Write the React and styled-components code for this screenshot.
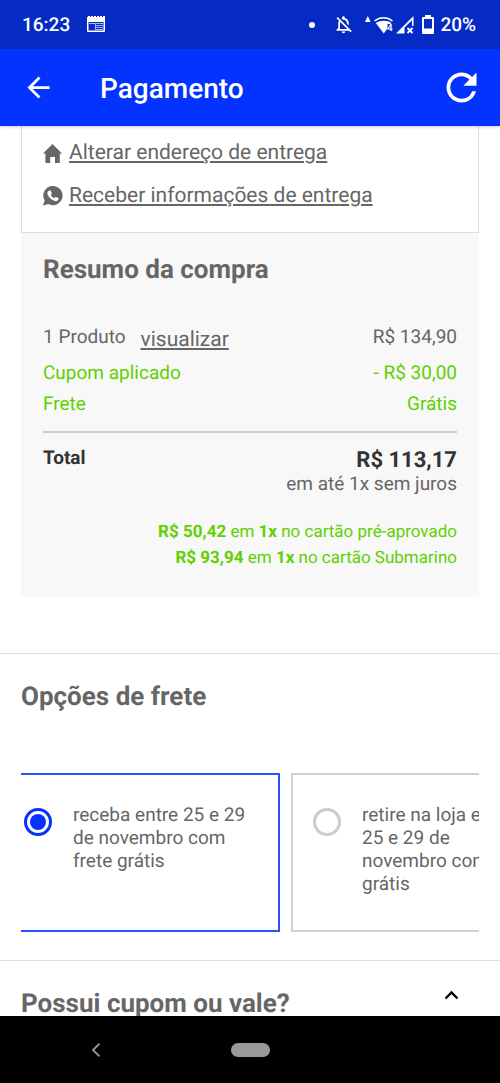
import { useLayoutEffect, useRef, useState } from 'react';
import styled, { createGlobalStyle } from 'styled-components';
import { MdArrowBack, MdOutlineNotificationsOff, MdRefresh } from 'react-icons/md';

const GlobalStyle = createGlobalStyle`
  * {
    box-sizing: border-box;
  }

  body {
    margin: 0;
    background: #fff;
    color: #666;
    font-family: Roboto, 'Liberation Sans', sans-serif;
    font-size: 19px;
    line-height: 24px;
    text-rendering: geometricPrecision;
  }

  h1, h2, p, dl, dt, dd, ul {
    margin: 0;
    padding: 0;
  }

  button {
    display: flex;
    padding: 0;
    border: 0;
    background: none;
    color: inherit;
    font: inherit;
    text-rendering: inherit;
    cursor: pointer;
  }

  svg {
    display: block;
    flex: none;
  }
`;

const StyledApp = styled.div`
  display: flex;
  flex-direction: column;
  height: 100vh;
`;

const StyledStatusBar = styled.div`
  display: flex;
  flex: none;
  align-items: center;
  justify-content: space-between;
  height: 49px;
  padding: 0 24px 0 22px;
  background: #062bc5;
  color: #fff;
  font-weight: 500;
`;

const StyledStatusGroup = styled.div`
  display: flex;
  align-items: center;
  gap: ${({ $gap }) => $gap}px;
`;

const StyledDot = styled.span`
  width: 6px;
  height: 6px;
  border-radius: 50%;
  background: #fff;
`;

const StyledHeader = styled.header`
  position: relative;
  z-index: 1;
  display: flex;
  flex: none;
  align-items: center;
  height: 77px;
  padding: 0 16px 0 22px;
  background: #0432ff;
  box-shadow: 0 1px 3px rgba(0, 0, 0, 0.2);
  color: #fff;

  h1 {
    flex: 1;
    margin-left: 45px;
    padding-top: 2px;
    font-size: 28px;
    font-weight: 500;
    line-height: 32px;
  }
`;

const StyledMain = styled.main`
  flex: 1;
  min-height: 0;
  overflow-y: auto;
  scrollbar-width: none;
`;

const StyledOrder = styled.div`
  margin: 0 21px 56px;
`;

const StyledDelivery = styled.ul`
  padding: 5px 21px 15px;
  border: 1px solid #ddd;
  border-top: 0;
  list-style: none;

  li {
    display: flex;
    align-items: center;
    gap: 6px;
    height: 43px;
  }
`;

const StyledLink = styled.a`
  color: #666;
  font-size: 21px;
  text-decoration: underline;
`;

const StyledSummary = styled.section`
  padding: 22px 22px 26px;
  background: #f8f8f8;
`;

const StyledTitle = styled.h2`
  font-size: 26px;
  font-weight: 700;
  line-height: 30px;
`;

const StyledList = styled.dl`
  padding: 37px 0 11px;
  border-bottom: 2px solid #ccc;
`;

const StyledRow = styled.div`
  display: flex;
  justify-content: space-between;
  min-height: 31px;
  padding: 3px 0;
  color: ${({ $green }) => ($green ? '#5fd000' : '#666')};

  dt {
    display: flex;
    gap: 15px;
  }

  a {
    padding: 3px 0;
  }
`;

const StyledTotal = styled.dl`
  display: flex;
  justify-content: space-between;
  padding-top: 13px;

  dt {
    color: #333;
    font-weight: 700;
  }

  dd {
    padding-top: 4px;
    text-align: right;
  }

  dd strong {
    display: block;
    color: #333;
    font-size: 22px;
    line-height: 22px;
  }
`;

const StyledCards = styled.div`
  padding-top: 23px;
  color: #5fd000;
  font-size: 17px;
  line-height: 26px;
  text-align: right;
`;

const StyledSection = styled.section`
  padding: 28px 21px;
  border-top: 1px solid #ddd;
`;

const StyledCarousel = styled.div`
  display: flex;
  gap: 11px;
  margin-top: 61px;
  overflow-x: auto;
  scrollbar-width: none;
`;

const StyledOption = styled.label`
  display: flex;
  flex: none;
  align-items: flex-start;
  gap: 21px;
  width: 278px;
  padding: 28px 31px 35px 20px;
  border: 2px solid ${({ $selected }) => ($selected ? '#2a50ff' : '#d0d0d0')};
  line-height: 23px;
  cursor: pointer;

  span {
    flex: 1;
    min-height: 92px;
  }
`;

const StyledRadio = styled.input`
  flex: none;
  width: 28px;
  height: 28px;
  margin: 5px 0 0;
  padding: 3px;
  appearance: none;
  border: 3px solid #ccc;
  border-radius: 50%;
  background-clip: content-box;

  &:checked {
    border-color: #0432ff;
    background-color: #0432ff;
  }
`;

const StyledCoupon = styled.button`
  justify-content: space-between;
  width: 100%;
  text-align: left;

  svg {
    margin: 1px 20px 0 0;
  }
`;

const StyledNavBar = styled.nav`
  display: grid;
  flex: none;
  grid-template-columns: 192px 1fr 192px;
  align-items: center;
  justify-items: center;
  height: 67px;
  background: #000;
  color: #999;
`;

const StyledHomeButton = styled.button`
  && {
    width: 39px;
    height: 14px;
    border-radius: 7px;
    background: #999;
  }
`;

function NewsIcon() {
  return (
    <svg width='18' height='17' viewBox='0 0 18 17' fill='#fff'>
      <path fillRule='evenodd' d='M0 1h1V0h2v1h1V0h2v1h1V0h2v1h1V0h2v1h1V0h2v1h1V0h2v15a1 1 0 0 1-1 1H1a1 1 0 0 1-1-1zM1.500 6v8.500h15V6z' />
      <path opacity='.65' d='M2 7h14v1H2zM9 9h7v1H9zM9 11h7v1H9zM9 13h7v1H9zM8 7h1v7H8z' />
    </svg>
  );
}

function SignalIcons() {
  return (
    <svg width='51' height='18' viewBox='0 0 51 18' fill='#fff'>
      <path d='M0 6 2.800 0 5.600 6z' />
      <path d='M9.500 5c5.500-4.400 12.500-4.400 18 0' fill='none' stroke='#fff' strokeWidth='1.600' />
      <path d='M10.800 7c4.500-3.100 11.500-3.100 15.600 0l-7.600 10.500z' />
      <path d='M22.500 8h6v8h-6z' fill='#062bc5' />
      <text x='22' y='15' fontSize='10' fontWeight='500'>4</text>
      <path fillRule='evenodd' d='M31 17.500 48.500 0v10H47V4.200L39.500 11.500v6z' />
      <path d='m42.500 12 5 5m0-5-5 5' stroke='#fff' strokeWidth='1.800' />
    </svg>
  );
}

function BatteryIcon() {
  return (
    <svg width='12' height='19' viewBox='0 0 12 19' fill='#fff'>
      <path fillRule='evenodd' d='M3 0h6v2h2a1 1 0 0 1 1 1v15a1 1 0 0 1-1 1H1a1 1 0 0 1-1-1V3a1 1 0 0 1 1-1h2zM2 4v9.500h8V4z' />
    </svg>
  );
}

function HouseIcon() {
  return (
    <svg width='20' height='20' viewBox='0 0 20 20' fill='#666'>
      <path d='M9.500 1 19 10.500h-2.200V20H12v-6H7.200v6H2.400v-9.500H0z' />
    </svg>
  );
}

function WhatsappIcon() {
  return (
    <svg width='20' height='20' viewBox='0 0 20 20'>
      <path fill='#666' d='M10 0a9.600 9.600 0 1 1-4.700 18L0 19.600l1.700-5A9.600 9.600 0 0 1 10 0z' />
      <path fill='#fff' d='M6 4.600h1.300q.4 0 .6.500l.9 2.100q.1.400-.1.700l-.9 1.100q1.200 2.300 3.600 3.300l1-1.200q.3-.4.8-.2l2 1q.5.200.4.700-.1 1.500-1 2-1.200.8-2.700.4-4.900-1.300-7.100-5.900-1.300-2.900 1.200-4.500z' />
    </svg>
  );
}

export default function App() {
  const carousel = useRef(null);
  const [selected, setSelected] = useState('entrega');

  const options = [
    { id: 'entrega', text: 'receba entre 25 e 29 de novembro com frete grátis' },
    { id: 'retirada', text: 'retire na loja entre 25 e 29 de novembro com frete grátis' }
  ];

  const cardOffers = [
    { price: 'R$ 50,42', card: 'cartão pré-aprovado' },
    { price: 'R$ 93,94', card: 'cartão Submarino' }
  ];

  // the carousel rests slightly past its first card
  useLayoutEffect(() => {
    carousel.current.scrollLeft = 19;
  }, []);

  return (
    <StyledApp>
      <GlobalStyle />
      <StyledStatusBar>
        <StyledStatusGroup $gap={17}>
          <span>16:23</span>
          <NewsIcon />
        </StyledStatusGroup>
        <StyledStatusGroup $gap={11}>
          <StyledStatusGroup $gap={18}>
            <StyledDot />
            <MdOutlineNotificationsOff size={21} />
          </StyledStatusGroup>
          <StyledStatusGroup $gap={6}>
            <SignalIcons />
            <BatteryIcon />
            <span>20%</span>
          </StyledStatusGroup>
        </StyledStatusGroup>
      </StyledStatusBar>

      <StyledHeader>
        <button type='button' aria-label='Voltar'><MdArrowBack size={33} /></button>
        <h1>Pagamento</h1>
        <button type='button' aria-label='Atualizar'><MdRefresh size={45} /></button>
      </StyledHeader>

      <StyledMain>
        <StyledOrder>
          <StyledDelivery>
            <li>
              <HouseIcon />
              <StyledLink href='#endereco'>Alterar endereço de entrega</StyledLink>
            </li>
            <li>
              <WhatsappIcon />
              <StyledLink href='#informacoes'>Receber informações de entrega</StyledLink>
            </li>
          </StyledDelivery>
          <StyledSummary>
            <StyledTitle>Resumo da compra</StyledTitle>
            <StyledList>
              <StyledRow>
                <dt>1 Produto <StyledLink href='#produtos'>visualizar</StyledLink></dt>
                <dd>R$ 134,90</dd>
              </StyledRow>
              <StyledRow $green>
                <dt>Cupom aplicado</dt>
                <dd>- R$ 30,00</dd>
              </StyledRow>
              <StyledRow $green>
                <dt>Frete</dt>
                <dd>Grátis</dd>
              </StyledRow>
            </StyledList>
            <StyledTotal>
              <dt>Total</dt>
              <dd>
                <strong>R$ 113,17</strong>
                em até 1x sem juros
              </dd>
            </StyledTotal>
            <StyledCards>
              {cardOffers.map(({ price, card }) => (
                <p key={card}><b>{price}</b> em <b>1x</b> no {card}</p>
              ))}
            </StyledCards>
          </StyledSummary>
        </StyledOrder>

        <StyledSection>
          <StyledTitle>Opções de frete</StyledTitle>
          <StyledCarousel ref={carousel}>
            {options.map(({ id, text }) => (
              <StyledOption key={id} $selected={selected === id}>
                <StyledRadio
                  type='radio'
                  name='frete'
                  value={id}
                  checked={selected === id}
                  onChange={() => setSelected(id)}
                />
                <span>{text}</span>
              </StyledOption>
            ))}
          </StyledCarousel>
        </StyledSection>

        <StyledSection>
          <StyledCoupon type='button'>
            <StyledTitle as='span'>Possui cupom ou vale?</StyledTitle>
            <svg width='15' height='10' viewBox='0 0 15 10' fill='none' stroke='#000' strokeWidth='2.400'>
              <path d='M1.500 8.500l6-6 6 6' />
            </svg>
          </StyledCoupon>
        </StyledSection>
      </StyledMain>

      <StyledNavBar>
        <button type='button' aria-label='Anterior'>
          <svg width='10' height='14' viewBox='0 0 10 14' fill='none' stroke='currentColor' strokeWidth='1.800'>
            <path d='M8.500 .7 2 7l6.500 6.300' />
          </svg>
        </button>
        <StyledHomeButton type='button' aria-label='Início' />
      </StyledNavBar>
    </StyledApp>
  );
}
